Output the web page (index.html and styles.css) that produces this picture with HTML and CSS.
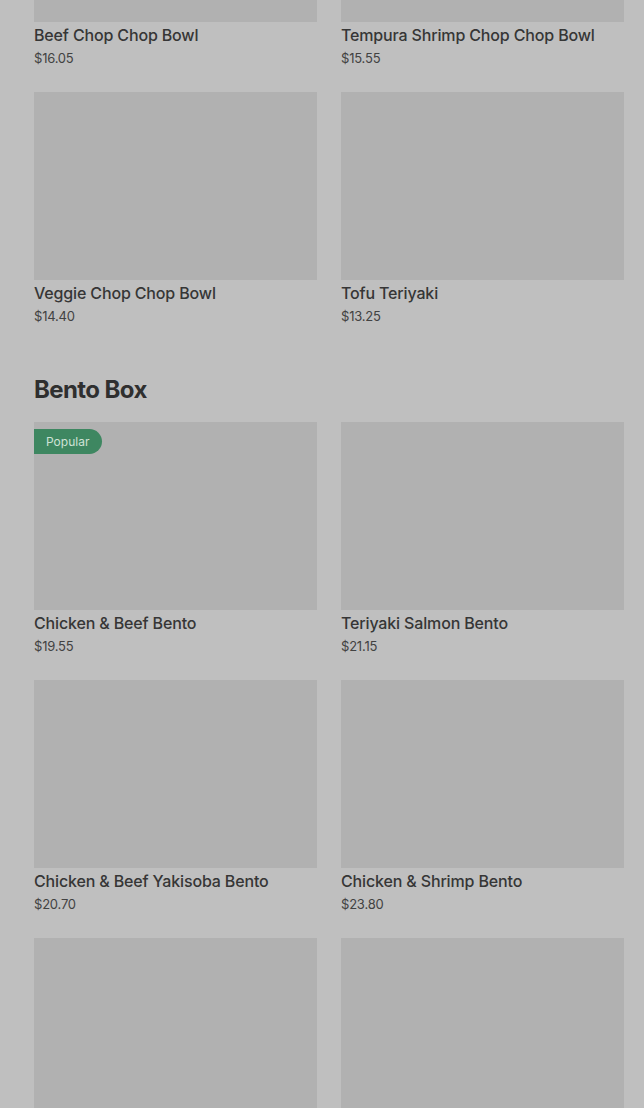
FILE: index.html
```html
<!DOCTYPE html>
<html>
<head>
<meta charset="utf-8">
<link rel="stylesheet" href="styles.css">
</head>
<body>
<main class="menu">
  <section class="section first">
    <div class="grid">
      <div class="card"><div class="img"></div><div class="title">Beef Chop Chop Bowl</div><div class="price">$16.05</div></div>
      <div class="card"><div class="img"></div><div class="title">Tempura Shrimp Chop Chop Bowl</div><div class="price">$15.55</div></div>
      <div class="card"><div class="img"></div><div class="title">Veggie Chop Chop Bowl</div><div class="price">$14.40</div></div>
      <div class="card"><div class="img"></div><div class="title">Tofu Teriyaki</div><div class="price">$13.25</div></div>
    </div>
  </section>
  <section class="section">
    <h2 class="heading">Bento Box</h2>
    <div class="grid">
      <div class="card"><div class="img"><span class="badge">Popular</span></div><div class="title">Chicken &amp; Beef Bento</div><div class="price">$19.55</div></div>
      <div class="card"><div class="img"></div><div class="title">Teriyaki Salmon Bento</div><div class="price">$21.15</div></div>
      <div class="card"><div class="img"></div><div class="title">Chicken &amp; Beef Yakisoba Bento</div><div class="price">$20.70</div></div>
      <div class="card"><div class="img"></div><div class="title">Chicken &amp; Shrimp Bento</div><div class="price">$23.80</div></div>
      <div class="card"><div class="img"></div></div>
      <div class="card"><div class="img"></div></div>
    </div>
  </section>
</main>
</body>
</html>
```
FILE: styles.css
```css
html, body {
  margin: 0;
  padding: 0;
  background: #bfbfbf;
  height: 1108px;
  overflow: hidden;
}
body {
  font-family: Inter, "Noto Sans", sans-serif;
  color: #333333;
}
.menu {
  padding: 0 20px 0 34px;
}
.section.first {
  margin-top: -166px;
}
.grid {
  display: grid;
  grid-template-columns: 283px 283px;
  column-gap: 24px;
  row-gap: 24px;
}
.card {
  display: flex;
  flex-direction: column;
}
.img {
  position: relative;
  height: 188px;
  background: #b1b1b1;
}
.title {
  margin-top: 3px;
  font-size: 16px;
  line-height: 20px;
  font-weight: 500;
  color: #363636;
  letter-spacing: -0.15px;
  white-space: nowrap;
}
.price {
  margin-top: 3px;
  font-size: 13px;
  line-height: 20px;
  color: #424242;
  letter-spacing: -0.2px;
}
.heading {
  margin: 48px 0 16px;
  font-size: 24px;
  line-height: 32px;
  font-weight: 700;
  color: #2f2f2f;
  letter-spacing: -0.6px;
}
.badge {
  position: absolute;
  left: 0;
  top: 7px;
  height: 25px;
  padding: 0 13px 0 12px;
  display: flex;
  align-items: center;
  background: #3e8761;
  color: #cfe2d6;
  font-size: 12px;
  border-radius: 0 13px 13px 0;
}
```
